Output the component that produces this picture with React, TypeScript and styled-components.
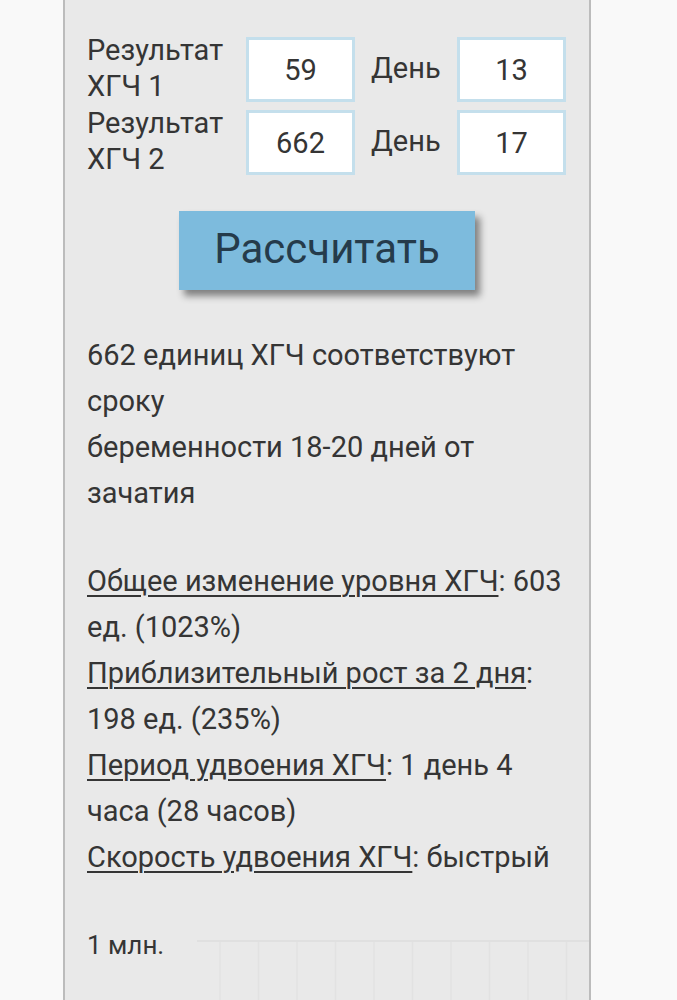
import styled, { createGlobalStyle } from "styled-components";

const GlobalStyle = createGlobalStyle`
  html, body {
    margin: 0;
    padding: 0;
    background: #f9f9f9;
    font-family: Roboto, "Noto Sans", "Liberation Sans", sans-serif;
    color: #353535;
  }
`;

const readings = [
  { label: "ХГЧ 1", value: "59", day: "13" },
  { label: "ХГЧ 2", value: "662", day: "17" },
];

const stats = [
  { term: "Общее изменение уровня ХГЧ", rest: ": 603", next: "ед. (1023%)" },
  { term: "Приблизительный рост за 2 дня", rest: ":", next: "198 ед. (235%)" },
  { term: "Период удвоения ХГЧ", rest: ": 1 день 4", next: "часа (28 часов)" },
  { term: "Скорость удвоения ХГЧ", rest: ": быстрый", next: null },
];

function App() {
  return (
    <>
      <GlobalStyle />
      <Page>
        <Panel>
          <Form>
            {readings.map((r) => (
              <InputRow key={r.label}>
                <Label>
                  Результат
                  <br />
                  {r.label}
                </Label>
                <Field readOnly value={r.value} />
                <DayLabel>День</DayLabel>
                <Field readOnly value={r.day} />
              </InputRow>
            ))}
          </Form>

          <ButtonWrap>
            <CalcButton>Рассчитать</CalcButton>
          </ButtonWrap>

          <Result>
            662 единиц ХГЧ соответствуют
            <br />
            сроку
            <br />
            беременности 18-20 дней от
            <br />
            зачатия
          </Result>

          <Result>
            {stats.map((s) => (
              <span key={s.term}>
                <Term>{s.term}</Term>
                {s.rest}
                <br />
                {s.next && (
                  <>
                    {s.next}
                    <br />
                  </>
                )}
              </span>
            ))}
          </Result>

          <Chart>
            <AxisLabel>1 млн.</AxisLabel>
            <GridArea>
              <svg width="100%" height="100%" preserveAspectRatio="none">
                <line x1="0" y1="1" x2="400" y2="1" stroke="#e0e0e0" strokeWidth="2" />
                {Array.from({ length: 10 }).map((_, i) => (
                  <line
                    key={i}
                    x1={23 + i * 38.5}
                    y1="2"
                    x2={23 + i * 38.5}
                    y2="100"
                    stroke="#e2e2e2"
                    strokeWidth="1.5"
                  />
                ))}
              </svg>
            </GridArea>
          </Chart>
        </Panel>
      </Page>
    </>
  );
}
export default App;

const Page = styled.div`
  height: 1000px;
  overflow: hidden;
  padding-left: 63px;
`;

const Panel = styled.div`
  width: 528px;
  min-height: 1000px;
  box-sizing: border-box;
  background: #e9e9e9;
  border-left: 2px solid #bcbcbc;
  border-right: 2px solid #bcbcbc;
  padding: 32px 0 0 22px;
`;

const Form = styled.div`
  display: flex;
  flex-direction: column;
  gap: 1px;
`;

const InputRow = styled.div`
  display: flex;
  align-items: center;
`;

const Label = styled.div`
  width: 159px;
  font-size: 29px;
  line-height: 36px;
`;

const DayLabel = styled.div`
  font-size: 29px;
  width: 102px;
  padding-left: 16px;
  box-sizing: border-box;
`;

const Field = styled.input`
  width: 109px;
  height: 65px;
  box-sizing: border-box;
  border: 3px solid #c4dfec;
  background: #fff;
  text-align: center;
  font-family: inherit;
  font-size: 29px;
  color: #353535;
  outline: none;
  padding: 0;
  margin-top: 3px;
`;

const ButtonWrap = styled.div`
  display: flex;
  justify-content: center;
  padding-right: 22px;
  margin-top: 34px;
`;

const CalcButton = styled.button`
  width: 296px;
  height: 79px;
  border: none;
  background: #7dbbdd;
  color: #253b4b;
  font-family: inherit;
  font-size: 42px;
  box-shadow: 5px 6px 7px rgba(0, 0, 0, 0.45);
  padding: 0 0 4px;
`;

const Result = styled.p`
  margin: 42px 0 0;
  font-size: 29px;
  line-height: 46px;
  white-space: nowrap;
`;

const Term = styled.span`
  text-decoration: underline;
  text-decoration-thickness: 2px;
  text-underline-offset: 4px;
`;

const Chart = styled.div`
  display: flex;
  margin-top: 43px;
  height: 200px;
`;

const AxisLabel = styled.div`
  width: 110px;
  font-size: 26px;
  line-height: 30px;
  padding-top: 7px;
`;

const GridArea = styled.div`
  flex: 1;
  padding-top: 17px;

  svg {
    display: block;
  }
`;
